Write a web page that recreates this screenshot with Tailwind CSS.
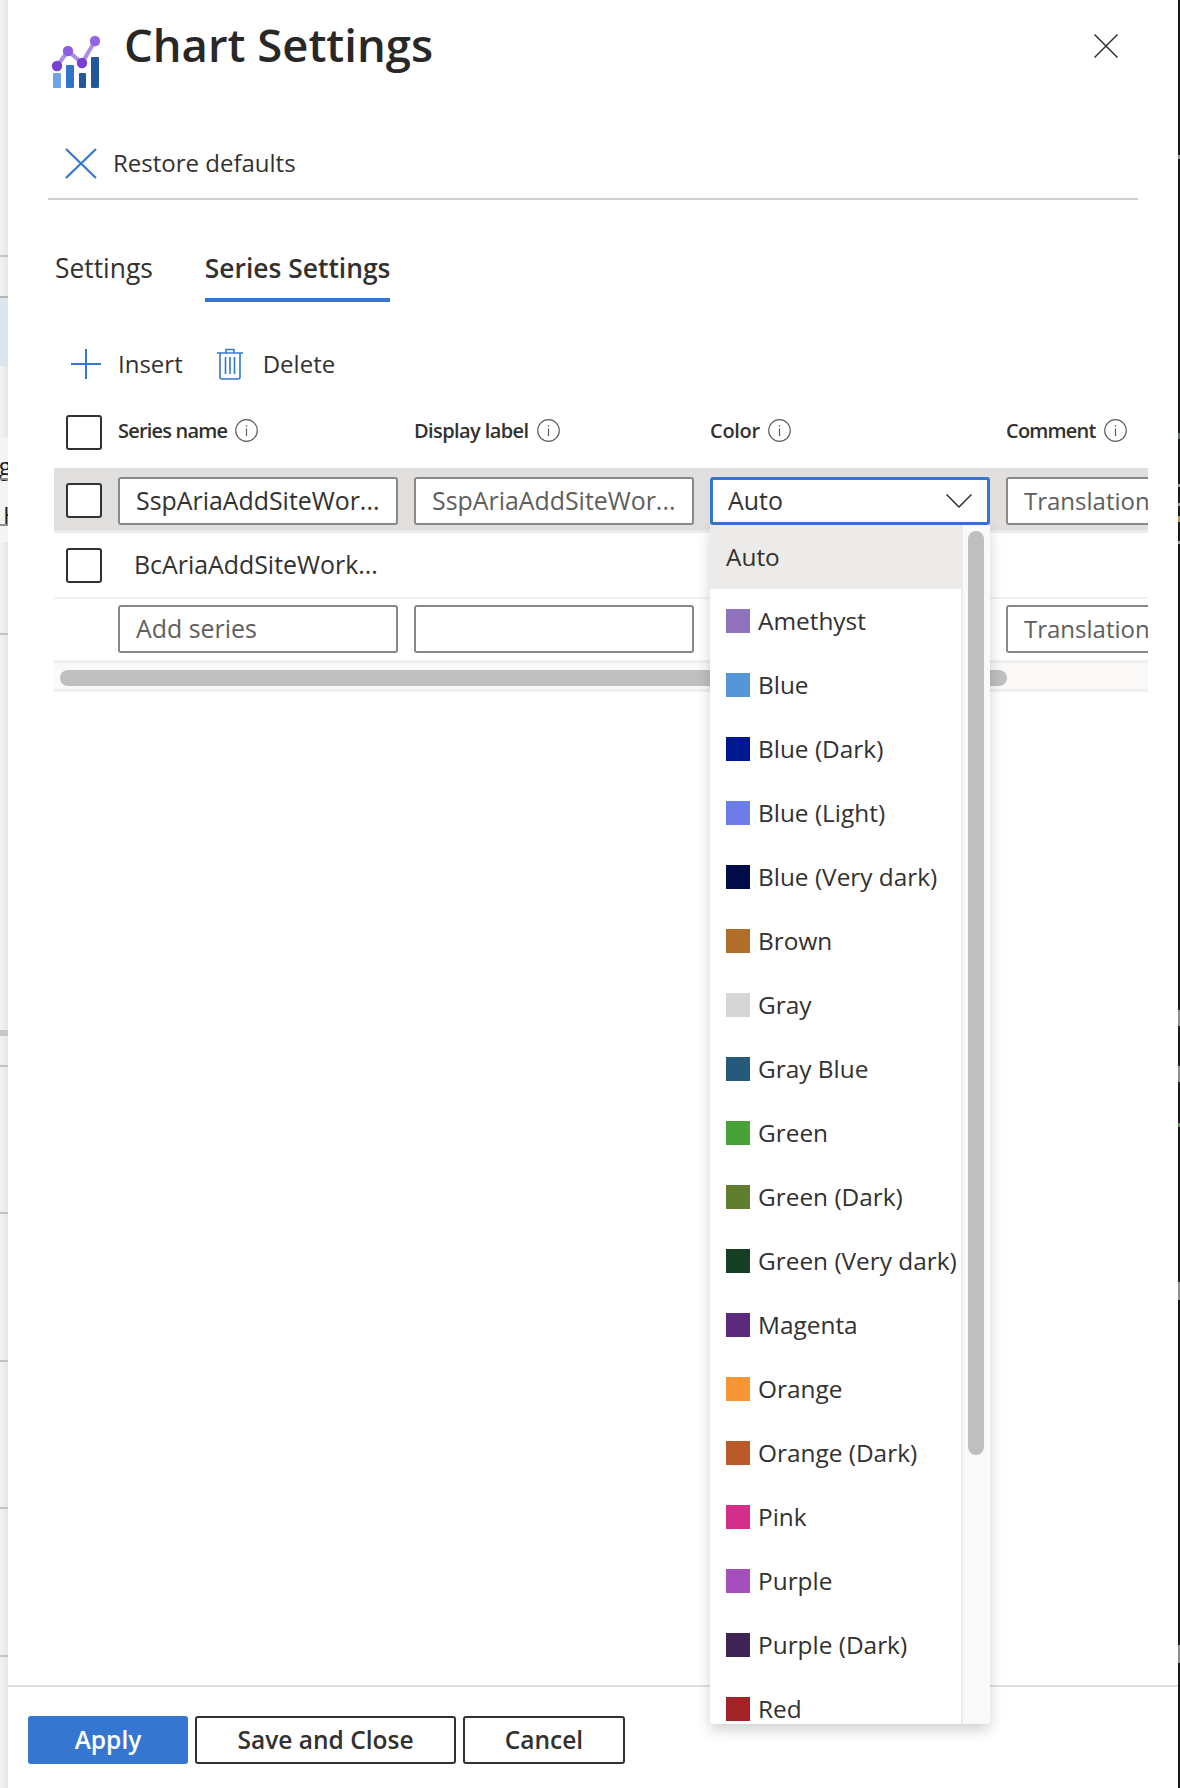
<!DOCTYPE html>
<html lang="en">
<head>
    <meta charset="UTF-8">
    <title>Chart Settings</title>
    <script src="https://cdn.jsdelivr.net/npm/@tailwindcss/browser@4"></script>
</head>
<body class="bg-white">
<div class="flex w-[1180px] h-[1788px] overflow-hidden font-['Open_Sans',sans-serif] text-[#323130] text-[24px]">

    <!-- page behind the panel, left edge -->
    <div class="relative w-[8px] h-full overflow-hidden bg-gradient-to-r from-[#f3f3f3] to-[#e6e6e6]">
        <div class="absolute left-0 top-[255px] w-full h-[2px] bg-[#c4c4c4]"></div>
        <div class="absolute left-0 top-[296px] w-full h-[70px] bg-[#dce6f0] border-t-2 border-[#b5b5b5]"></div>
        <div class="absolute left-0 top-[437px] w-full h-[105px] bg-[#f4f4f4]"></div>
        <div class="absolute left-[-16px] top-[452px] text-[24px] leading-[28px] text-[#222]">ng</div>
        <div class="absolute left-[3px] top-[501px] text-[24px] leading-[28px] text-[#222]">H</div>
        <div class="absolute left-0 top-[478px] w-full h-[2px] bg-[#8f8f8f]"></div>
        <div class="absolute left-0 top-[524px] w-full h-[2px] bg-[#8f8f8f]"></div>
        <div class="absolute left-0 top-[633px] w-full h-[2px] bg-[#c4c4c4]"></div>
        <div class="absolute left-0 top-[1030px] w-full h-[6px] bg-[#c8c8c8]"></div>
        <div class="absolute left-0 top-[1065px] w-full h-[2px] bg-[#c4c4c4]"></div>
        <div class="absolute left-0 top-[1212px] w-full h-[2px] bg-[#c4c4c4]"></div>
        <div class="absolute left-0 top-[1360px] w-full h-[2px] bg-[#c4c4c4]"></div>
        <div class="absolute left-0 top-[1507px] w-full h-[2px] bg-[#c4c4c4]"></div>
        <div class="absolute left-0 top-[1655px] w-full h-[2px] bg-[#c4c4c4]"></div>
    </div>

    <!-- panel -->
    <div class="relative flex flex-col w-[1170px] h-full bg-white">

        <div class="flex items-start h-[120px] pl-[43px]">
            <svg class="mt-[34px]" width="50" height="56" viewBox="0 0 50 56">
                <rect x="2" y="39" width="8" height="15" rx="1" fill="#70a2ea"/>
                <rect x="15" y="31" width="8" height="23" rx="1" fill="#3175ca"/>
                <rect x="28" y="39" width="7" height="15" rx="1" fill="#22589b"/>
                <rect x="40" y="23" width="8" height="31" rx="1" fill="#22589b"/>
                <path d="M6 32 L17 17 L31 29 L44 7" fill="none" stroke="#a98ee8" stroke-width="4"/>
                <circle cx="6" cy="32" r="5.2" fill="#7a40d4"/>
                <circle cx="17" cy="17" r="5.2" fill="#8b5ee0"/>
                <circle cx="31" cy="29" r="5.2" fill="#7a40d4"/>
                <circle cx="44" cy="7" r="5.2" fill="#9265e2"/>
            </svg>
            <h1 class="ml-[23px] mt-[12px] text-[45.4px] leading-[64px] font-semibold text-[#292827]">Chart Settings</h1>
            <svg class="ml-auto mr-[60px] mt-[34px]" width="24" height="24" viewBox="0 0 24 24">
                <path d="M0.5 0.5 L23.5 23.5 M23.5 0.5 L0.5 23.5" stroke="#323130" stroke-width="1.5"/>
            </svg>
        </div>

        <div class="flex items-center h-[80px] ml-[40px] w-[1090px] border-b-2 border-[#d2d0ce] pl-[17px] pt-[8px]">
            <svg width="32" height="31" viewBox="0 0 32 31">
                <path d="M1 1 L31 30 M31 1 L1 30" stroke="#3577d0" stroke-width="2.2"/>
            </svg>
            <span class="ml-[16px]">Restore defaults</span>
        </div>

        <div class="flex items-end h-[102px] ml-[47px] gap-[52px]">
            <div class="pb-[11px] border-b-4 border-transparent text-[26.4px] leading-[37px]">Settings</div>
            <div class="pb-[11px] border-b-4 border-[#3577d0] text-[26.4px] leading-[37px] font-semibold">Series Settings</div>
        </div>

        <div class="flex items-center h-[103px] ml-[63px] pt-[20px]">
            <svg width="30" height="30" viewBox="0 0 30 30">
                <path d="M15 0 V30 M0 15 H30" stroke="#3577d0" stroke-width="2"/>
            </svg>
            <span class="ml-[17px]">Insert</span>
            <svg class="ml-[34px]" width="26" height="32" viewBox="0 0 26 32" fill="none" stroke="#3577d0" stroke-width="1.6">
                <path d="M0 5 H26 M9 5 V1.5 H17 V5 M3 5 V29 Q3 31 5 31 H21 Q23 31 23 29 V5"/>
                <path d="M8.5 9 V26 M13 9 V26 M17.5 9 V26"/>
            </svg>
            <span class="ml-[20px]">Delete</span>
        </div>

        <div class="ml-[46px] w-[1094px] overflow-hidden text-[24.9px]">
            <div class="flex h-[63px] pl-[12px] pt-[10px]">
                <div class="w-[36px] h-[35px] mr-[16px] border-2 border-[#323130] rounded-[3px] shrink-0"></div>
                <div class="flex items-start w-[280px] mr-[16px] pt-[2px] shrink-0 text-[20px] leading-[28px] font-semibold tracking-[-0.04em]">Series name
                    <svg class="ml-[8px] mt-[2px]" width="23" height="23" viewBox="0 0 23 23" fill="none" stroke="#605e5c" stroke-width="1.2"><circle cx="11.5" cy="11.5" r="10.8"/><path d="M11.5 9.5 V17 M11.5 6 V7.5"/></svg>
                </div>
                <div class="flex items-start w-[280px] mr-[16px] pt-[2px] shrink-0 text-[20px] leading-[28px] font-semibold tracking-[-0.03em]">Display label
                    <svg class="ml-[9px] mt-[2px]" width="23" height="23" viewBox="0 0 23 23" fill="none" stroke="#605e5c" stroke-width="1.2"><circle cx="11.5" cy="11.5" r="10.8"/><path d="M11.5 9.5 V17 M11.5 6 V7.5"/></svg>
                </div>
                <div class="flex items-start w-[280px] mr-[16px] pt-[2px] shrink-0 text-[20px] leading-[28px] font-semibold tracking-[-0.015em]">Color
                    <svg class="ml-[8px] mt-[2px]" width="23" height="23" viewBox="0 0 23 23" fill="none" stroke="#605e5c" stroke-width="1.2"><circle cx="11.5" cy="11.5" r="10.8"/><path d="M11.5 9.5 V17 M11.5 6 V7.5"/></svg>
                </div>
                <div class="flex items-start w-[280px] pt-[2px] shrink-0 text-[20px] leading-[28px] font-semibold tracking-[-0.04em]">Comment
                    <svg class="ml-[8px] mt-[2px]" width="23" height="23" viewBox="0 0 23 23" fill="none" stroke="#605e5c" stroke-width="1.2"><circle cx="11.5" cy="11.5" r="10.8"/><path d="M11.5 9.5 V17 M11.5 6 V7.5"/></svg>
                </div>
            </div>

            <div class="flex items-center h-[65px] pl-[12px] pt-[3px] bg-[#e1dfdd] border-b-[3px] border-[#edebe9]">
                <div class="w-[36px] h-[35px] mr-[16px] bg-white border-2 border-[#323130] rounded-[3px] shrink-0"></div>
                <div class="flex items-center w-[280px] h-[48px] mr-[16px] px-[16px] bg-white border-2 border-[#8a8886] rounded-[3px] shrink-0 whitespace-nowrap">SspAriaAddSiteWor...</div>
                <div class="flex items-center w-[280px] h-[48px] mr-[16px] px-[16px] bg-white border-2 border-[#8a8886] rounded-[3px] shrink-0 whitespace-nowrap text-[#605e5c]">SspAriaAddSiteWor...</div>
                <div class="flex items-center justify-between w-[280px] h-[48px] mr-[16px] pl-[15px] pr-[15px] bg-white border-[3px] border-[#3577d0] rounded-[3px] shrink-0">
                    <span>Auto</span>
                    <svg width="26" height="14" viewBox="0 0 26 14"><path d="M0.5 0.5 L13 13 L25.5 0.5" fill="none" stroke="#323130" stroke-width="1.5"/></svg>
                </div>
                <div class="flex items-center w-[280px] h-[48px] px-[16px] bg-white border-2 border-[#8a8886] rounded-[3px] shrink-0 whitespace-nowrap text-[24px] text-[#605e5c]">Translation</div>
            </div>

            <div class="flex items-center h-[66px] pl-[12px] border-b-2 border-[#f3f2f1]">
                <div class="w-[36px] h-[35px] mr-[16px] border-2 border-[#323130] rounded-[3px] shrink-0"></div>
                <div class="pl-[16px]">BcAriaAddSiteWork...</div>
            </div>

            <div class="flex items-center h-[61px] pl-[64px] pb-[2px]">
                <div class="flex items-center w-[280px] h-[48px] mr-[16px] px-[16px] border-2 border-[#8a8886] rounded-[3px] shrink-0 text-[#605e5c]">Add series</div>
                <div class="w-[280px] h-[48px] mr-[16px] border-2 border-[#8a8886] rounded-[3px] shrink-0"></div>
                <div class="w-[280px] h-[48px] mr-[16px] shrink-0"></div>
                <div class="flex items-center w-[280px] h-[48px] px-[16px] border-2 border-[#8a8886] rounded-[3px] shrink-0 whitespace-nowrap text-[24px] text-[#605e5c]">Translation</div>
            </div>

            <div class="h-[32px] pl-[6px] pt-[7px] bg-[#faf9f8] border-y-[3px] border-[#f0efee]">
                <div class="w-[947px] h-[16px] rounded-full bg-[#bfbfbf]"></div>
            </div>
        </div>

        <div class="mt-auto flex items-start gap-[7px] h-[103px] pl-[20px] pt-[29px] border-t-2 border-[#e1dfdd] font-semibold text-[24.5px]">
            <button class="w-[160px] h-[48px] bg-[#3577d0] text-white rounded-[3px]">Apply</button>
            <button class="w-[261px] h-[48px] border-2 border-[#323130] rounded-[3px]">Save and Close</button>
            <button class="w-[162px] h-[48px] border-2 border-[#323130] rounded-[3px]">Cancel</button>
        </div>

        <!-- colour dropdown, open over the table -->
        <div class="absolute left-[702px] top-[525px] flex w-[280px] h-[1199px] overflow-hidden bg-white rounded-b-[3px] shadow-[0_6px_14px_rgba(0,0,0,0.18)] text-[24.4px]">
            <div class="w-[251px] shrink-0">
                <div class="flex items-center h-[64px] pl-[16px] bg-[#edebe9]">Auto</div>
                <div class="flex items-center h-[64px] pl-[16px]"><span class="w-[24px] h-[24px] mr-[8px] bg-[#8e72bc]"></span>Amethyst</div>
                <div class="flex items-center h-[64px] pl-[16px]"><span class="w-[24px] h-[24px] mr-[8px] bg-[#5596d9]"></span>Blue</div>
                <div class="flex items-center h-[64px] pl-[16px]"><span class="w-[24px] h-[24px] mr-[8px] bg-[#00188f]"></span>Blue (Dark)</div>
                <div class="flex items-center h-[64px] pl-[16px]"><span class="w-[24px] h-[24px] mr-[8px] bg-[#6c7de8]"></span>Blue (Light)</div>
                <div class="flex items-center h-[64px] pl-[16px]"><span class="w-[24px] h-[24px] mr-[8px] bg-[#000c48]"></span>Blue (Very dark)</div>
                <div class="flex items-center h-[64px] pl-[16px]"><span class="w-[24px] h-[24px] mr-[8px] bg-[#b16e28]"></span>Brown</div>
                <div class="flex items-center h-[64px] pl-[16px]"><span class="w-[24px] h-[24px] mr-[8px] bg-[#d5d6d8]"></span>Gray</div>
                <div class="flex items-center h-[64px] pl-[16px]"><span class="w-[24px] h-[24px] mr-[8px] bg-[#255a79]"></span>Gray Blue</div>
                <div class="flex items-center h-[64px] pl-[16px]"><span class="w-[24px] h-[24px] mr-[8px] bg-[#47a237]"></span>Green</div>
                <div class="flex items-center h-[64px] pl-[16px]"><span class="w-[24px] h-[24px] mr-[8px] bg-[#5e7e2d]"></span>Green (Dark)</div>
                <div class="flex items-center h-[64px] pl-[16px] whitespace-nowrap"><span class="w-[24px] h-[24px] mr-[8px] bg-[#143f22]"></span>Green (Very dark)</div>
                <div class="flex items-center h-[64px] pl-[16px]"><span class="w-[24px] h-[24px] mr-[8px] bg-[#5c2a7d]"></span>Magenta</div>
                <div class="flex items-center h-[64px] pl-[16px]"><span class="w-[24px] h-[24px] mr-[8px] bg-[#f69536]"></span>Orange</div>
                <div class="flex items-center h-[64px] pl-[16px]"><span class="w-[24px] h-[24px] mr-[8px] bg-[#ba5a28]"></span>Orange (Dark)</div>
                <div class="flex items-center h-[64px] pl-[16px]"><span class="w-[24px] h-[24px] mr-[8px] bg-[#d32f8a]"></span>Pink</div>
                <div class="flex items-center h-[64px] pl-[16px]"><span class="w-[24px] h-[24px] mr-[8px] bg-[#a44fbb]"></span>Purple</div>
                <div class="flex items-center h-[64px] pl-[16px]"><span class="w-[24px] h-[24px] mr-[8px] bg-[#3f2455]"></span>Purple (Dark)</div>
                <div class="flex items-center h-[64px] pl-[16px]"><span class="w-[24px] h-[24px] mr-[8px] bg-[#a12326]"></span>Red</div>
            </div>
            <div class="w-[29px] pt-[6px] pl-[5px] bg-[#faf9f8] border-l-2 border-[#edebe9]">
                <div class="w-[16px] h-[924px] rounded-full bg-[#bfbfbf]"></div>
            </div>
        </div>
    </div>

    <!-- page behind the panel, right edge -->
    <div class="relative w-[2px] h-full bg-[#1a1a1a]">
        <div class="absolute left-0 top-[155px] w-full h-[4px] bg-[#9a9a9a]"></div>
        <div class="absolute left-0 top-[433px] w-full h-[6px] bg-[#5f7370]"></div>
        <div class="absolute left-0 top-[484px] w-full h-[3px] bg-[#a0a0a0]"></div>
        <div class="absolute left-0 top-[503px] w-full h-[3px] bg-[#a0a0a0]"></div>
        <div class="absolute left-0 top-[516px] w-full h-[6px] bg-[#b89a4a]"></div>
        <div class="absolute left-0 top-[541px] w-full h-[3px] bg-[#a0a0a0]"></div>
        <div class="absolute left-0 top-[1010px] w-full h-[16px] bg-[#8f8f8f]"></div>
        <div class="absolute left-0 top-[1066px] w-full h-[16px] bg-[#8f8f8f]"></div>
        <div class="absolute left-0 top-[1123px] w-full h-[4px] bg-[#5c8a5c]"></div>
        <div class="absolute left-0 top-[1282px] w-full h-[18px] bg-[#8f8f8f]"></div>
        <div class="absolute left-0 top-[1645px] w-full h-[18px] bg-[#8f8f8f]"></div>
    </div>
</div>
</body>
</html>
